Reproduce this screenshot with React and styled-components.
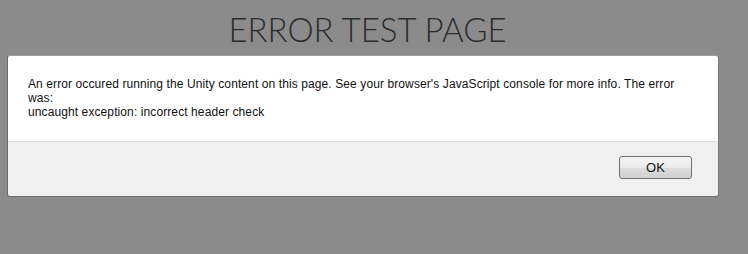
import React from "react"
import styled, { createGlobalStyle } from "styled-components"

const GlobalStyle = createGlobalStyle`
  html, body {
    margin: 0;
    padding: 0;
  }
  body {
    background: #8b8b8b;
    width: 748px;
    height: 254px;
    overflow: hidden;
  }
`

const Page = styled.div`
  display: flex;
  flex-direction: column;
  padding: 0 29px 0 7px;
`

const Title = styled.h1`
  margin: 0;
  height: 55px;
  padding: 11px 0 0 9px;
  box-sizing: border-box;
  text-align: center;
  font-family: Lato, "Open Sans", sans-serif;
  font-weight: 300;
  font-size: 33px;
  line-height: 36px;
  color: #2b2b2b;
`

const Dialog = styled.div`
  width: 712px;
  box-sizing: border-box;
  border: 1px solid #6b6b6b;
  border-top-color: #9a9a9a;
  border-right-color: #7a7a7a;
  border-radius: 3px;
  overflow: hidden;
  font-family: "Liberation Sans", Arial, sans-serif;
  font-size: 12px;
  color: #111;
`

const Body = styled.div`
  background: #fff;
  height: 86px;
  box-sizing: border-box;
  padding: 21px 30px 0 20px;
  line-height: 14px;
  letter-spacing: 0.1px;
  border-bottom: 1px solid #dedede;
`

const Footer = styled.div`
  background: #f0f0f0;
  height: 54px;
  display: flex;
  align-items: center;
  justify-content: flex-end;
  padding: 0 26px 4px 0;
  box-sizing: border-box;
`

const Button = styled.button`
  width: 73px;
  height: 23px;
  border: 1px solid #707070;
  border-radius: 3px;
  background: linear-gradient(#f3f3f3 0%, #ebebeb 50%, #dddddd 51%, #cfcfcf 100%);
  font-family: "Liberation Sans", Arial, sans-serif;
  font-size: 13px;
  color: #111;
  padding: 0;
  cursor: pointer;
`

export default function App() {
  return (
    <>
      <GlobalStyle />
      <Page>
        <Title>ERROR TEST PAGE</Title>
        <Dialog>
          <Body>
            An error occured running the Unity content on this page. See your browser's JavaScript console for more info. The error was:
            <br />
            uncaught exception: incorrect header check
          </Body>
          <Footer>
            <Button>OK</Button>
          </Footer>
        </Dialog>
      </Page>
    </>
  )
}
